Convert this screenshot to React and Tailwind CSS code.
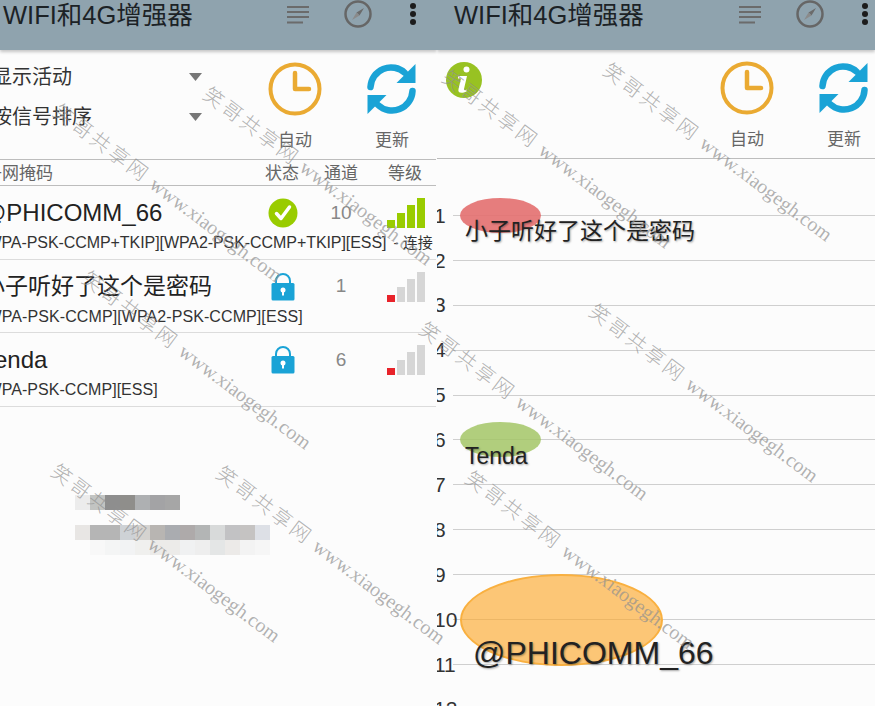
import React from 'react';

const SANS = 'font-["Liberation_Sans","Noto_Sans_CJK_SC",sans-serif]';

const ListIcon = () => (
  <svg width="24" height="20" viewBox="0 0 24 20" fill="none" stroke="#6b6b6b" strokeWidth="2">
    <path d="M1 2h22M1 7h22M1 12h22M1 17.500h16" />
  </svg>
);

const CompassIcon = () => (
  <svg width="28" height="28" viewBox="0 0 28 28" fill="none">
    <circle cx="14" cy="14" r="12.500" stroke="#666" strokeWidth="2.500" />
    <path d="M20 8l-4.500 7.500-3-3z" fill="#6b6b6b" />
    <path d="M8 20l4.500-7.500 3 3z" fill="#8a8a8a" />
  </svg>
);

const DotsIcon = () => (
  <svg width="8" height="24" viewBox="0 0 8 24" fill="#1c1c1c">
    <circle cx="4" cy="3" r="3" />
    <circle cx="4" cy="11" r="3" />
    <circle cx="4" cy="19" r="3" />
  </svg>
);

const ClockIcon = () => (
  <svg width="54" height="54" viewBox="0 0 54 54" fill="none" stroke="#eaaa32" strokeWidth="4">
    <circle cx="27" cy="27" r="24.500" />
    <path d="M27 11v16h14" strokeWidth="4.500" strokeLinecap="round" strokeLinejoin="round" />
  </svg>
);

const RefreshIcon = () => (
  <svg width="50" height="50" viewBox="0 0 50 50" fill="#1aa3d6">
    <path d="M3.500 23A20.500 20.500 0 0 1 38 9" fill="none" stroke="#1aa3d6" strokeWidth="6.500" strokeLinecap="round" />
    <path d="M48.500 0v19h-19z" />
    <path d="M45.500 27A20.500 20.500 0 0 1 11 41" fill="none" stroke="#1aa3d6" strokeWidth="6.500" strokeLinecap="round" />
    <path d="M.5 50V31h19z" />
  </svg>
);

const CheckIcon = () => (
  <svg width="30" height="30" viewBox="0 0 30 30">
    <circle cx="15" cy="15" r="14.500" fill="#99cc00" />
    <path d="M8.500 15.500l4.500 5L21.500 9" fill="none" stroke="#fff" strokeWidth="3.500" strokeLinecap="round" strokeLinejoin="round" />
  </svg>
);

const LockIcon = () => (
  <svg width="24" height="28" viewBox="0 0 24 28">
    <path d="M5 13V8a7 7 0 0 1 14 0v5" fill="none" stroke="#1aa3d6" strokeWidth="2" />
    <rect x="0.500" y="10" width="23" height="17.500" rx="1.500" fill="#1aa3d6" />
    <circle cx="12" cy="17" r="2.500" fill="#fff" />
    <rect x="11" y="17" width="2" height="5.500" fill="#fff" />
  </svg>
);

const InfoIcon = () => (
  <svg width="36" height="36" viewBox="0 0 36 36">
    <circle cx="18" cy="18" r="18" fill="#98c222" />
    <circle cx="20.500" cy="7.500" r="3" fill="#fff" />
    <path d="M12 14h9l-3 13c-.3 1.300.8 1.500 3 .5l-.5 2c-5 2.500-9 1.500-8-2.500l2.500-10.500H12z" fill="#fff" />
  </svg>
);

const Arrow = () => (
  <svg width="13" height="8" viewBox="0 0 13 8" fill="#777">
    <path d="M0 0h13L6.500 8z" />
  </svg>
);

const Signal = ({ strong }) => (
  <div className="ml-[3px] flex h-[30px] items-end gap-[2px]">
    <div className={strong ? 'h-[8px] w-[8px] bg-[#99cc00]' : 'h-[7px] w-[8px] bg-[#e8232a]'} />
    <div className={strong ? 'h-[15px] w-[8px] bg-[#99cc00]' : 'h-[15px] w-[8px] bg-[#d6d6d6]'} />
    <div className={strong ? 'h-[23px] w-[8px] bg-[#99cc00]' : 'h-[23px] w-[8px] bg-[#d6d6d6]'} />
    <div className={strong ? 'h-[30px] w-[8px] bg-[#99cc00]' : 'h-[30px] w-[8px] bg-[#d6d6d6]'} />
  </div>
);

const Toolbar = ({ titleClass }) => (
  <div className="relative z-10 flex h-[50px] shrink-0 items-start bg-[#8fa3ae] shadow-[0_2px_3px_rgba(0,0,0,0.22)]">
    <div className={`${titleClass} shrink-0 whitespace-nowrap text-[25.500px] leading-[30px] text-[#1c2226]`}>
      WIFI和4G增强器
    </div>
    <div className="mt-[5px] w-[24px]"><ListIcon /></div>
    <div className="ml-[34px]"><CompassIcon /></div>
    <div className="ml-[37px] mt-[3px]"><DotsIcon /></div>
  </div>
);

const ActionButtons = () => (
  <div className="flex items-start">
    <div className="flex w-[54px] flex-col items-center">
      <ClockIcon />
      <span className="mt-[14px] text-[17px] leading-[22px] text-[#666]">自动</span>
    </div>
    <div className="ml-[45px] mt-[2px] flex w-[50px] flex-col items-center">
      <RefreshIcon />
      <span className="mt-[16px] text-[17px] leading-[22px] text-[#666]">更新</span>
    </div>
  </div>
);

const networks = [
  { name: '@PHICOMM_66', sizeClass: 'text-[24px]', subClass: 'tracking-[-0.07px]', sub: '[WPA-PSK-CCMP+TKIP][WPA2-PSK-CCMP+TKIP][ESS]', status: ' - 连接', channel: '10', strong: true },
  { name: '小子听好了这个是密码', sizeClass: 'text-[23px]', subClass: 'tracking-[0.09px]', sub: '[WPA-PSK-CCMP][WPA2-PSK-CCMP][ESS]', channel: '1' },
  { name: 'Tenda', sizeClass: 'text-[24px]', subClass: 'tracking-[0.05px]', sub: '[WPA-PSK-CCMP][ESS]', channel: '6' },
];

const blurRows = [
  ['#ececec', '#c2c4c2', '#8e8e8e', '#8f8e8b', '#aeb0b2', '#a3a3a5', '#a6a6a6'],
  ['#e8e6e4', '#b5b5b5', '#b5b5b5', '#ced2d6', '#d5d3d0', '#b8b5b2', '#aaacb0', '#aeaaaa', '#b3b5b5', '#d8dada', '#c2c2c4', '#c5c3c2', '#dde0e6'],
  ['#fcfcfc', '#f8f8f8', '#f4f5f5', '#f2f3f4', '#f0f0ee', '#ecebe9', '#ecebe9', '#f0f1f2', '#eeeeee', '#e4e6e6', '#eceae8', '#f3f3f3', '#f6f6f6'],
];

const BlurRow = ({ colors, className }) => (
  <div className={`${className} flex h-[15px] pl-[75px]`}>
    {colors.map((c, i) => (
      <div key={i} className="h-[15px] w-[15px]" style={{ backgroundColor: c }} />
    ))}
  </div>
);

const LeftPanel = () => (
  <div className="w-[437px] shrink-0 overflow-hidden">
    <Toolbar titleClass="ml-[3px] w-[283px]" />
    <div className="mr-[1px] flex h-[110px] border-b border-[#bdbdbd]">
      <div className="w-[268px] shrink-0 pt-[13px]">
        <div className="flex h-[28px] items-center">
          <span className="-ml-[8px] w-[197px] whitespace-nowrap text-[20px] leading-[28px] text-[#333]">显示活动</span>
          <Arrow />
        </div>
        <div className="mt-[12px] flex h-[28px] items-center">
          <span className="-ml-[8px] w-[197px] whitespace-nowrap text-[20px] leading-[28px] text-[#333]">按信号排序</span>
          <Arrow />
        </div>
      </div>
      <div className="pt-[12px]"><ActionButtons /></div>
    </div>
    <div className="mr-[1px] flex h-[26px] items-center border-b border-[#bdbdbd] pt-[2px] text-[17px] text-[#666]">
      <span className="-ml-[15px] w-[280px] shrink-0 whitespace-nowrap">子网掩码</span>
      <span className="w-[59px] shrink-0 whitespace-nowrap">状态</span>
      <span className="w-[64px] shrink-0 whitespace-nowrap">通道</span>
      <span className="whitespace-nowrap">等级</span>
    </div>
    {networks.map((n) => (
      <div key={n.name} className="mr-[1px] h-[73.500px] border-b border-[#dcdcdc]">
        <div className="flex h-[48px] items-center pt-[6px]">
          <span className={`${n.sizeClass} -ml-[18px] w-[286px] shrink-0 whitespace-nowrap text-[#222]`}>{n.name}</span>
          <div className="flex w-[30px] shrink-0 justify-center">{n.strong ? <CheckIcon /> : <LockIcon />}</div>
          <span className="w-[86px] shrink-0 text-center text-[19px] text-[#888]">{n.channel}</span>
          <Signal strong={n.strong} />
        </div>
        <div className="-ml-[18px] mt-[1px] flex items-center whitespace-pre text-[16px] leading-[16px] text-[#333]">
          <span className={n.subClass}>{n.sub}</span>
          {n.status && <span className="ml-[3px] text-[15px]">{n.status}</span>}
        </div>
      </div>
    ))}
    <BlurRow colors={blurRows[0]} className="mt-[88.500px]" />
    <BlurRow colors={blurRows[1]} className="mt-[15px]" />
    <BlurRow colors={blurRows[2]} className="" />
  </div>
);

const channels = ['1', '2', '3', '4', '5', '6', '7', '8', '9', '10', '11', '12'];

const RightPanel = () => (
  <div className="w-[438px] shrink-0 overflow-hidden">
    <Toolbar titleClass="ml-[17px] w-[284px]" />
    <div className="flex h-[109px] justify-between border-b border-[#bdbdbd]">
      <div className="ml-[9px] mt-[12px]"><InfoIcon /></div>
      <div className="mr-[6px] pt-[11px]"><ActionButtons /></div>
    </div>
    <div className="relative pt-[34px]">
      {channels.map((c) => (
        <div key={c} className="flex h-[44.900px] items-center">
          <span className="w-[16px] shrink-0 -translate-x-[3px] whitespace-nowrap text-[21px] text-[#333]">{c}</span>
          <div className="h-px flex-1 bg-[#cfcfcf]" />
        </div>
      ))}
      <div className="absolute left-[23px] top-[39px] h-[35px] w-[81px] rounded-[50%] bg-[#e36f6f]/90" />
      <div className="absolute left-[23px] top-[263px] h-[35px] w-[81px] rounded-[50%] bg-[#a3c566]/85" />
      <div className="absolute left-[23px] top-[415px] h-[92px] w-[203px] rounded-[50%] border-2 border-[#f9b040] bg-[#fca92e]/65" />
      <span className="absolute left-[28px] top-[57px] whitespace-nowrap text-[23px] leading-[30px] text-[#222] [text-shadow:1px_1px_2px_rgba(0,0,0,0.35)]">小子听好了这个是密码</span>
      <span className="absolute left-[28px] top-[282px] whitespace-nowrap text-[23px] leading-[30px] text-[#222] [text-shadow:1px_1px_2px_rgba(0,0,0,0.35)]">Tenda</span>
      <span className="absolute left-[36px] top-[474px] whitespace-nowrap text-[32px] leading-[40px] text-[#222] [text-shadow:1px_1px_2px_rgba(0,0,0,0.35)]">@PHICOMM_66</span>
    </div>
  </div>
);

// watermark start points, read off the screenshot
const watermarks = [
  'left-[213px] top-[82px]',
  'left-[63px] top-[99px]',
  'left-[452px] top-[65px]',
  'left-[613px] top-[58px]',
  'left-[92px] top-[266px]',
  'left-[429px] top-[317px]',
  'left-[599px] top-[299px]',
  'left-[61px] top-[459px]',
  'left-[226px] top-[461px]',
  'left-[475px] top-[466px]',
];

const Watermark = ({ className }) => (
  <div className={`${className} pointer-events-none absolute z-20 origin-top-left rotate-[37deg] whitespace-nowrap font-['Liberation_Serif','Noto_Sans_CJK_SC',serif] text-[20px] font-light leading-[24px] text-[#909090]/70`}>
    <span className="tracking-[3px]">笑哥共享网</span>
    <span className="ml-[6px]">www.xiaogegh.com</span>
  </div>
);

export default function App() {
  return (
    <div className={`${SANS} relative flex h-[706px] w-[875px] overflow-hidden bg-[#fcfcfc]`}>
      <LeftPanel />
      <RightPanel />
      {watermarks.map((w) => (
        <Watermark key={w} className={w} />
      ))}
    </div>
  );
}
